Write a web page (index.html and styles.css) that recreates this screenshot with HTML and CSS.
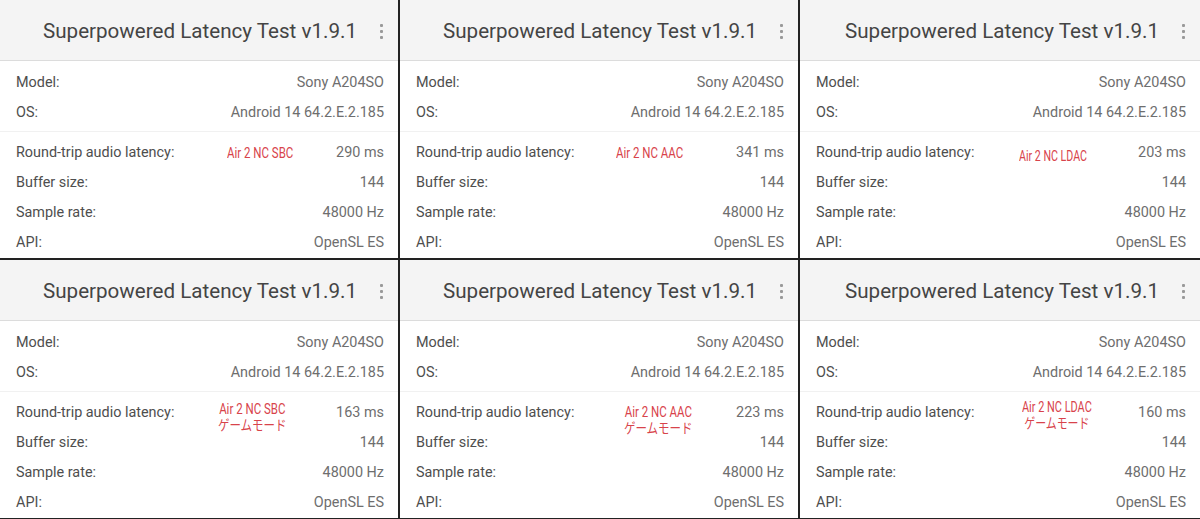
FILE: index.html
```html
<!DOCTYPE html>
<html>
	<head>
		<title>Superpowered Latency Test</title>
		<meta charset="UTF-8" />
		<link rel="stylesheet" href="styles.css">
	</head>
	<body>
		<div id="grid">
			<div class="panel">
				<div class="header"><span class="title">Superpowered Latency Test v1.9.1</span><span class="kebab"><i></i><i></i><i></i></span></div>
				<div class="group top">
					<div class="row"><span>Model:</span><span class="value">Sony A204SO</span></div>
					<div class="row"><span>OS:</span><span class="value">Android 14 64.2.E.2.185</span></div>
				</div>
				<div class="group">
					<div class="row"><span>Round-trip audio latency:</span><span class="value">290 ms</span></div>
					<div class="row"><span>Buffer size:</span><span class="value">144</span></div>
					<div class="row"><span>Sample rate:</span><span class="value">48000 Hz</span></div>
					<div class="row"><span>API:</span><span class="value">OpenSL ES</span></div>
				</div>
				<div class="note n1">Air 2 NC SBC</div>
			</div>
			<div class="panel">
				<div class="header"><span class="title">Superpowered Latency Test v1.9.1</span><span class="kebab"><i></i><i></i><i></i></span></div>
				<div class="group top">
					<div class="row"><span>Model:</span><span class="value">Sony A204SO</span></div>
					<div class="row"><span>OS:</span><span class="value">Android 14 64.2.E.2.185</span></div>
				</div>
				<div class="group">
					<div class="row"><span>Round-trip audio latency:</span><span class="value">341 ms</span></div>
					<div class="row"><span>Buffer size:</span><span class="value">144</span></div>
					<div class="row"><span>Sample rate:</span><span class="value">48000 Hz</span></div>
					<div class="row"><span>API:</span><span class="value">OpenSL ES</span></div>
				</div>
				<div class="note n2">Air 2 NC AAC</div>
			</div>
			<div class="panel">
				<div class="header"><span class="title">Superpowered Latency Test v1.9.1</span><span class="kebab"><i></i><i></i><i></i></span></div>
				<div class="group top">
					<div class="row"><span>Model:</span><span class="value">Sony A204SO</span></div>
					<div class="row"><span>OS:</span><span class="value">Android 14 64.2.E.2.185</span></div>
				</div>
				<div class="group">
					<div class="row"><span>Round-trip audio latency:</span><span class="value">203 ms</span></div>
					<div class="row"><span>Buffer size:</span><span class="value">144</span></div>
					<div class="row"><span>Sample rate:</span><span class="value">48000 Hz</span></div>
					<div class="row"><span>API:</span><span class="value">OpenSL ES</span></div>
				</div>
				<div class="note n3">Air 2 NC LDAC</div>
			</div>
			<div class="panel">
				<div class="header"><span class="title">Superpowered Latency Test v1.9.1</span><span class="kebab"><i></i><i></i><i></i></span></div>
				<div class="group top">
					<div class="row"><span>Model:</span><span class="value">Sony A204SO</span></div>
					<div class="row"><span>OS:</span><span class="value">Android 14 64.2.E.2.185</span></div>
				</div>
				<div class="group">
					<div class="row"><span>Round-trip audio latency:</span><span class="value">163 ms</span></div>
					<div class="row"><span>Buffer size:</span><span class="value">144</span></div>
					<div class="row"><span>Sample rate:</span><span class="value">48000 Hz</span></div>
					<div class="row"><span>API:</span><span class="value">OpenSL ES</span></div>
				</div>
				<div class="note n4">Air 2 NC SBC<br />ゲームモード</div>
			</div>
			<div class="panel">
				<div class="header"><span class="title">Superpowered Latency Test v1.9.1</span><span class="kebab"><i></i><i></i><i></i></span></div>
				<div class="group top">
					<div class="row"><span>Model:</span><span class="value">Sony A204SO</span></div>
					<div class="row"><span>OS:</span><span class="value">Android 14 64.2.E.2.185</span></div>
				</div>
				<div class="group">
					<div class="row"><span>Round-trip audio latency:</span><span class="value">223 ms</span></div>
					<div class="row"><span>Buffer size:</span><span class="value">144</span></div>
					<div class="row"><span>Sample rate:</span><span class="value">48000 Hz</span></div>
					<div class="row"><span>API:</span><span class="value">OpenSL ES</span></div>
				</div>
				<div class="note n5">Air 2 NC AAC<br />ゲームモード</div>
			</div>
			<div class="panel">
				<div class="header"><span class="title">Superpowered Latency Test v1.9.1</span><span class="kebab"><i></i><i></i><i></i></span></div>
				<div class="group top">
					<div class="row"><span>Model:</span><span class="value">Sony A204SO</span></div>
					<div class="row"><span>OS:</span><span class="value">Android 14 64.2.E.2.185</span></div>
				</div>
				<div class="group">
					<div class="row"><span>Round-trip audio latency:</span><span class="value">160 ms</span></div>
					<div class="row"><span>Buffer size:</span><span class="value">144</span></div>
					<div class="row"><span>Sample rate:</span><span class="value">48000 Hz</span></div>
					<div class="row"><span>API:</span><span class="value">OpenSL ES</span></div>
				</div>
				<div class="note n6">Air 2 NC LDAC<br />ゲームモード</div>
			</div>
		</div>
	</body>
</html>
```

FILE: styles.css
```css
html, body {
	margin: 0;
	height: 100%;
	overflow: hidden;
	background: #222;
}

body {
	font: 14.4px Roboto, "Noto Sans CJK JP", sans-serif;
}

#grid {
	display: grid;
	grid-template-columns: 398px 398px 1fr;
	grid-auto-rows: 258px;
	gap: 2px;
}

.panel {
	position: relative;
	background: #fff;
	overflow: hidden;
}

.header {
	display: flex;
	align-items: center;
	justify-content: flex-end;
	height: 60px;
	background: #f4f4f4;
	border-bottom: 1px solid #dcdcdc;
}

.title {
	font-size: 20.6px;
	color: #444;
	margin-right: 12px;
	padding-top: 2px;
}

.kebab {
	display: flex;
	flex-direction: column;
	align-items: center;
	gap: 3px;
	width: 24px;
	margin-right: 5px;
	padding-top: 2px;
}

.kebab i {
	display: block;
	width: 3px;
	height: 3px;
	border-radius: 1px;
	background: #999;
}

.group {
	padding: 5px 14px 0 16px;
}

.group.top {
	padding-top: 6px;
	padding-bottom: 4px;
	border-bottom: 1px solid #f1f1f1;
}

.row {
	display: flex;
	justify-content: space-between;
	align-items: center;
	height: 30px;
	color: #4e4e4e;
}

.row .value {
	color: #6e6e6e;
}

.note {
	position: absolute;
	font-size: 14px;
	line-height: 16px;
	color: #d8434b;
	text-align: center;
	transform: scaleX(0.82);
	transform-origin: left top;
}

.n1 { left: 227px; top: 145px; }
.n2 { left: 216px; top: 145px; }
.n3 { left: 219px; top: 148px; transform: scaleX(0.76); }
.n4 { left: 218px; top: 141px; }
.n5 { left: 224px; top: 144px; }
.n6 { left: 222px; top: 139px; transform: scaleX(0.78); }
```
